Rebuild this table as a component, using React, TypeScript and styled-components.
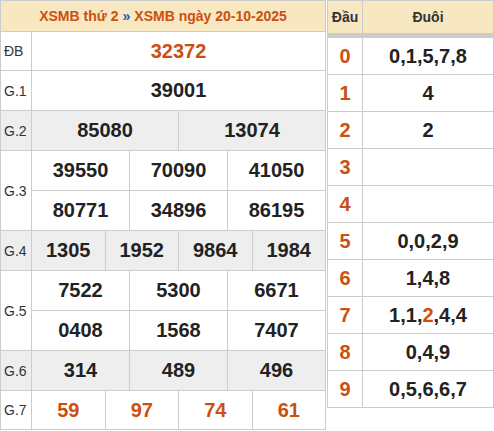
import React from "react";
import styled, { createGlobalStyle } from "styled-components";

const Global = createGlobalStyle`
  html, body { margin: 0; padding: 0; background: #fff; }
  body { font-family: "Liberation Sans", Arial, sans-serif; color: #222; }
`;

const ORANGE = "#cc4f10";
const LINE = "#cccccc";
const HEAD_BG = "#f8e8c1";
const GRAY = "#eeeeee";

const Page = styled.div`
  display: flex;
  align-items: flex-start;
  gap: 1px;
  width: 494px;
`;

const Results = styled.div`
  box-sizing: border-box;
  width: 326px;
  display: grid;
  grid-template-columns: 30px 293px;
  gap: 1px;
  padding: 1px;
  background: ${LINE};
`;

const Title = styled.div`
  grid-column: 1 / -1;
  height: 30px;
  background: ${HEAD_BG};
  display: flex;
  align-items: center;
  justify-content: center;
  font-size: 14px;
  font-weight: bold;
  gap: 4px;
`;

const TitleLink = styled.span<{ $blue?: boolean }>`
  color: ${(p) => (p.$blue ? "#1c5fb3" : ORANGE)};
`;

const Label = styled.div<{ $gray?: boolean }>`
  background: ${(p) => (p.$gray ? GRAY : "#fff")};
  display: flex;
  align-items: center;
  padding-left: 3px;
  font-size: 14px;
  color: #333;
  white-space: nowrap;
`;

const Prize = styled.div<{ $cols: number }>`
  display: grid;
  grid-template-columns: repeat(${(p) => p.$cols}, 1fr);
  gap: 1px;
  background: ${LINE};
`;

const Num = styled.div<{ $gray?: boolean; $accent?: boolean; $h: number }>`
  height: ${(p) => p.$h}px;
  background: ${(p) => (p.$gray ? GRAY : "#fff")};
  display: flex;
  align-items: center;
  justify-content: center;
  font-size: 20px;
  font-weight: bold;
  color: ${(p) => (p.$accent ? ORANGE : "#222")};
`;

const Loto = styled.div`
  box-sizing: border-box;
  width: 167px;
  display: grid;
  grid-template-columns: 34px 130px;
  grid-auto-rows: 36px;
  gap: 1px;
  padding: 1px;
  background: ${LINE};
`;

const LotoHead = styled.div`
  height: 32px;
  background: ${HEAD_BG};
  display: flex;
  align-items: center;
  justify-content: center;
  font-size: 14px;
  font-weight: bold;
  color: #333;
`;

const LotoCell = styled.div<{ $accent?: boolean }>`
  background: #fff;
  display: flex;
  align-items: center;
  justify-content: center;
  font-size: 20px;
  font-weight: bold;
  color: ${(p) => (p.$accent ? ORANGE : "#222")};
`;

const Hi = styled.span`
  color: ${ORANGE};
`;

type Row = {
  label: string;
  nums: string[];
  cols: number;
  gray?: boolean;
  accent?: boolean;
  h?: number;
};

const rows: Row[] = [
  { label: "ĐB", nums: ["32372"], cols: 1, accent: true, h: 38 },
  { label: "G.1", nums: ["39001"], cols: 1 },
  { label: "G.2", nums: ["85080", "13074"], cols: 2, gray: true },
  { label: "G.3", nums: ["39550", "70090", "41050", "80771", "34896", "86195"], cols: 3 },
  { label: "G.4", nums: ["1305", "1952", "9864", "1984"], cols: 4, gray: true },
  { label: "G.5", nums: ["7522", "5300", "6671", "0408", "1568", "7407"], cols: 3 },
  { label: "G.6", nums: ["314", "489", "496"], cols: 3, gray: true },
  { label: "G.7", nums: ["59", "97", "74", "61"], cols: 4, accent: true, h: 38 },
];

const loto: { d: string; t: React.ReactNode }[] = [
  { d: "0", t: "0,1,5,7,8" },
  { d: "1", t: "4" },
  { d: "2", t: "2" },
  { d: "3", t: "" },
  { d: "4", t: "" },
  { d: "5", t: "0,0,2,9" },
  { d: "6", t: "1,4,8" },
  { d: "7", t: (<>1,1,<Hi>2</Hi>,4,4</>) },
  { d: "8", t: "0,4,9" },
  { d: "9", t: "0,5,6,6,7" },
];

export default function App() {
  return (
    <>
      <Global />
      <Page>
        <Results>
          <Title>
            <TitleLink>XSMB thứ 2</TitleLink>
            <TitleLink $blue>»</TitleLink>
            <TitleLink>XSMB ngày 20-10-2025</TitleLink>
          </Title>
          {rows.map((r) => (
            <React.Fragment key={r.label}>
              <Label $gray={r.gray}>{r.label}</Label>
              <Prize $cols={r.cols}>
                {r.nums.map((n, i) => (
                  <Num key={i} $gray={r.gray} $accent={r.accent} $h={r.h ?? 39}>
                    {n}
                  </Num>
                ))}
              </Prize>
            </React.Fragment>
          ))}
        </Results>
        <Loto>
          <LotoHead>Đầu</LotoHead>
          <LotoHead>Đuôi</LotoHead>
          {loto.map((l) => (
            <React.Fragment key={l.d}>
              <LotoCell $accent>{l.d}</LotoCell>
              <LotoCell>{l.t}</LotoCell>
            </React.Fragment>
          ))}
        </Loto>
      </Page>
    </>
  );
}
